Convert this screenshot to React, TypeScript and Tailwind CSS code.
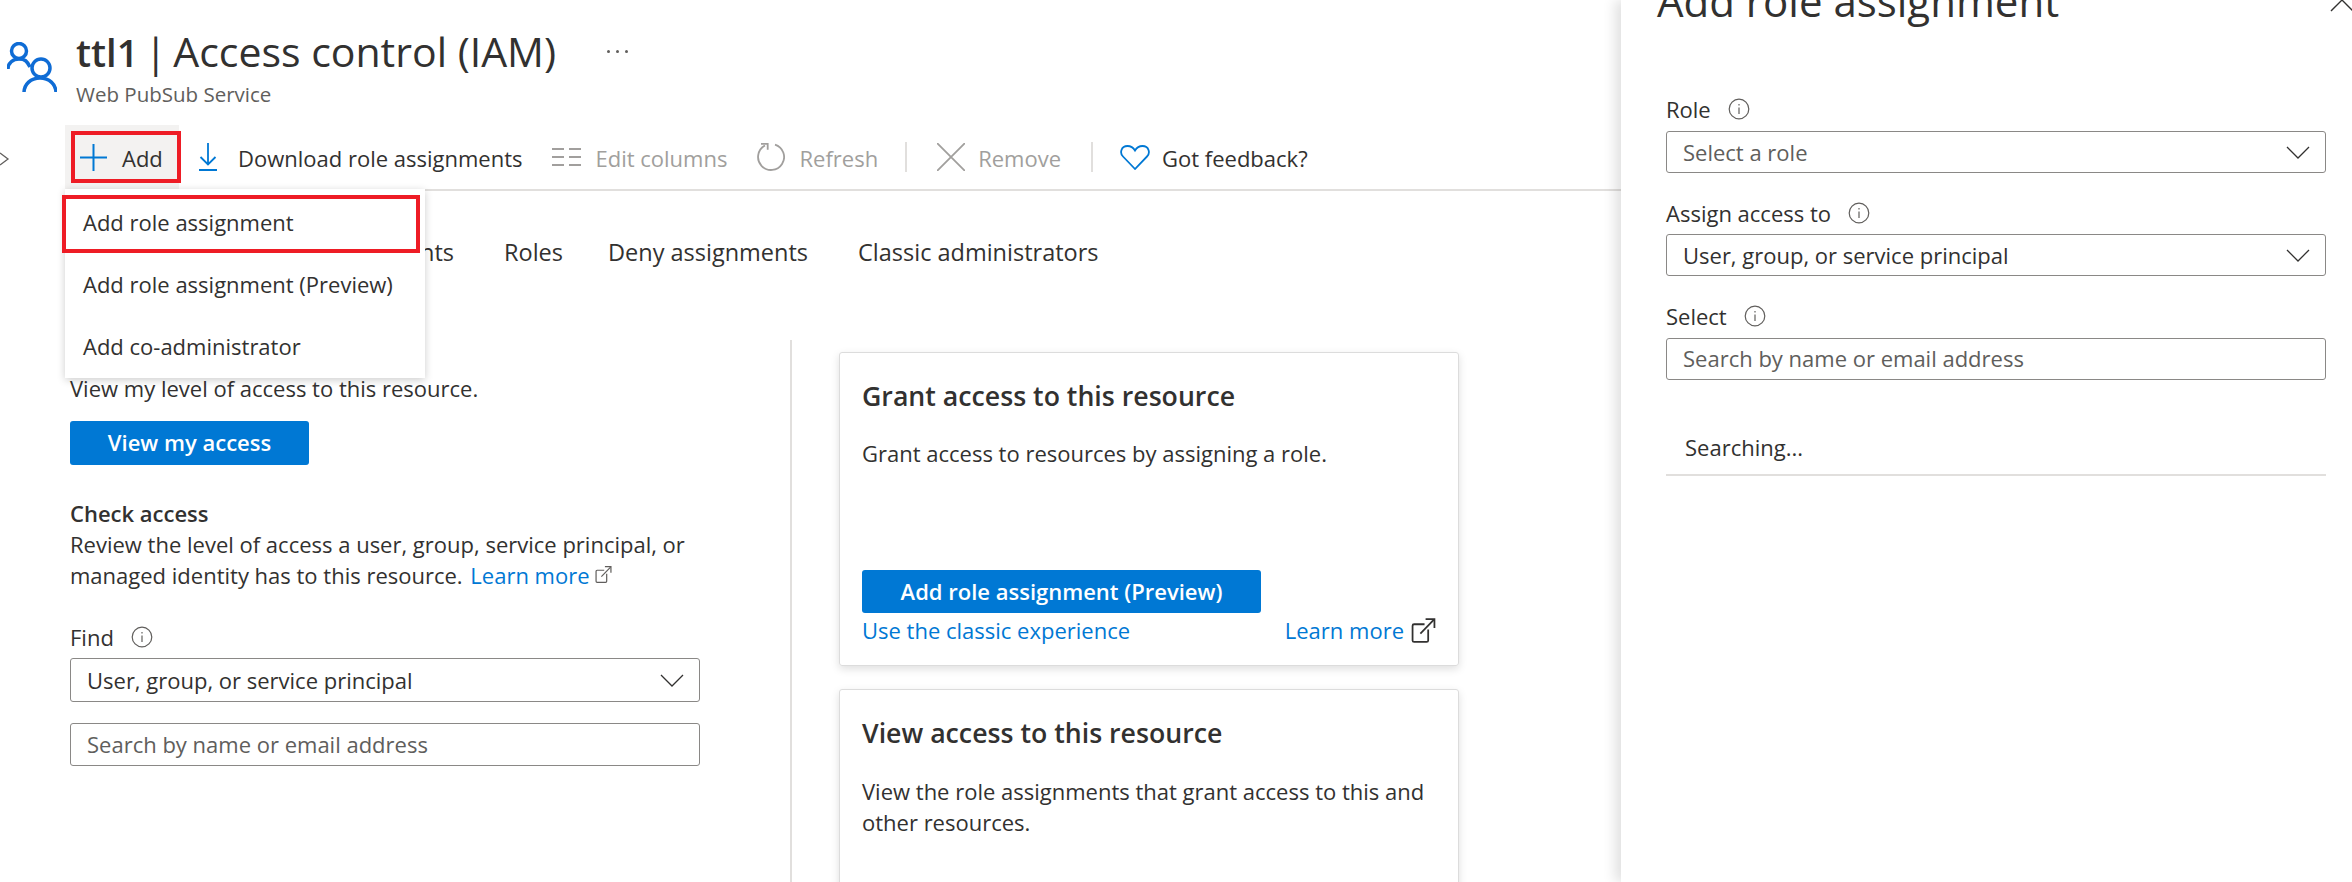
import React from 'react';

const PeopleIcon = () => (
  <svg width="50" height="50" viewBox="0 0 50 50" fill="none" stroke="#0f6cd5" strokeWidth="3.500">
    <circle cx="12" cy="9" r="7.500" />
    <path d="M1 27C1 21 6 17 12 17S20 19 23 25" />
    <circle cx="34" cy="26" r="9" />
    <path d="M17 51C17 42 24 36 33 36S49 42 49 51" />
  </svg>
);

const Chevron = () => (
  <svg width="24" height="14" viewBox="0 0 24 14" fill="none" stroke="#605e5c" strokeWidth="1.300">
    <path d="M3 1l8 6-8 6" />
    <path d="M12 1l8 6-8 6" />
  </svg>
);

const InfoIcon = () => (
  <svg width="22" height="22" viewBox="0 0 22 22" fill="none" stroke="#605e5c" strokeWidth="1.200">
    <circle cx="11" cy="11" r="9.800" />
    <path d="M11 9.500v6.500" />
    <path d="M11 6v1.400" />
  </svg>
);

const ExternalIcon = ({ size, color }: { size: number; color: string }) => (
  <svg width={size} height={size} viewBox="0 0 24 24" fill="none" stroke={color} strokeWidth="1.700">
    <path d="M13 6H3a1.500 1.500 0 0 0-1.500 1.500v14A1.500 1.500 0 0 0 3 23h12a1.500 1.500 0 0 0 1.500-1.500V11" />
    <path d="M9 15L22 1.500" />
    <path d="M14 1h8.500v8.500" />
  </svg>
);

const SelectBox = ({ text, placeholder }: { text: string; placeholder?: boolean }) => (
  <div className="flex h-full items-center justify-between rounded-[3px] border border-[#8a8886] bg-white pl-[16px] pr-[15px]">
    <span className={placeholder ? 'text-[#605e5c]' : 'text-[#323130]'}>{text}</span>
    <svg width="24" height="13" viewBox="0 0 24 13" fill="none" stroke="#323130" strokeWidth="1.300">
      <path d="M1 1l11 11L23 1" />
    </svg>
  </div>
);

const SearchInput = () => (
  <input
    readOnly
    placeholder="Search by name or email address"
    className="h-full w-full rounded-[3px] border border-[#8a8886] bg-white px-[16px] pb-[2px] text-[#605e5c] placeholder:text-[#605e5c]"
  />
);

const Label = ({ text }: { text: string }) => (
  <div className="flex h-[30px] items-center gap-[17px]">
    <span>{text}</span>
    <InfoIcon />
  </div>
);

export default function App() {
  return (
    <div className="flex h-[882px] w-[2352px] overflow-hidden bg-white font-['Open_Sans',sans-serif] text-[22px] leading-[31px] text-[#323130]">
      <main className="relative w-[1621px] shrink-0">
        {/* header */}
        <div className="flex h-[125px] items-start pl-[7px] pt-[42px]">
          <PeopleIcon />
          <div className="-mt-[22px] ml-[19px]">
            <div className="flex items-center">
              <h1 className="w-[482px] whitespace-nowrap text-[41px] leading-[62px]">
                <span className="text-[38px] font-semibold">ttl1</span>
                <span className="-mx-[4.500px]"> | </span>Access control (IAM)
              </h1>
              <span className="ml-[49px] flex gap-[6px]">
                <i className="h-[3px] w-[3px] rounded-full bg-[#605e5c]" />
                <i className="h-[3px] w-[3px] rounded-full bg-[#605e5c]" />
                <i className="h-[3px] w-[3px] rounded-full bg-[#605e5c]" />
              </span>
            </div>
            <div className="-mt-[2px] text-[20.500px] leading-[26px] text-[#605e5c]">Web PubSub Service</div>
          </div>
        </div>

        <div className="absolute left-[-12px] top-[152px]">
          <Chevron />
        </div>

        {/* toolbar */}
        <div className="ml-[65px] flex h-[66px] items-center border-b-2 border-[#e1dfdd]">
          <div className="flex h-full w-[114px] items-center bg-[#f3f2f1] pl-[15px]">
            <svg width="27" height="27" viewBox="0 0 27 27" stroke="#0078d4" strokeWidth="2">
              <path d="M13.500 0v27M0 13.500h27" />
            </svg>
            <span className="ml-[15px] mt-[2px]">Add</span>
          </div>
          <svg className="ml-[20px]" width="18" height="28" viewBox="0 0 18 28" fill="none" stroke="#0078d4" strokeWidth="1.800">
            <path d="M9 0v21M1.500 14L9 21.500 16.500 14M0 27h18" />
          </svg>
          <span className="ml-[21px] mt-[2px]">Download role assignments</span>
          <svg className="ml-[29px]" width="29" height="18" viewBox="0 0 29 18" stroke="#a19f9d" strokeWidth="1.800">
            <path d="M0 1h12M17 1h12M0 9h12M17 9h12M0 17h12M17 17h12" />
          </svg>
          <span className="ml-[15px] mt-[2px] text-[#a19f9d]">Edit columns</span>
          <svg className="ml-[30px]" width="28" height="28" viewBox="0 0 28 28" fill="none" stroke="#a19f9d" strokeWidth="1.800">
            <path d="M18 1.600A13 13 0 1 1 8 2.500" />
            <path d="M4 .8h6.700v6" />
          </svg>
          <span className="ml-[14px] mt-[2px] text-[#a19f9d]">Refresh</span>
          <i className="ml-[27px] h-[30px] w-[2px] bg-[#e1dfdd]" />
          <svg className="ml-[30px]" width="28" height="28" viewBox="0 0 28 28" stroke="#a19f9d" strokeWidth="1.800">
            <path d="M0 0l28 28M28 0L0 28" />
          </svg>
          <span className="ml-[13px] mt-[2px] text-[#a19f9d]">Remove</span>
          <i className="ml-[30px] h-[30px] w-[2px] bg-[#e1dfdd]" />
          <svg className="ml-[27px]" width="30" height="25" viewBox="0 0 30 25" fill="none" stroke="#0078d4" strokeWidth="1.800">
            <path d="M15 24L3 11.500C-.5 8 1 1 7.500 1c3.500 0 6 2 7.500 4.500C16.500 3 19 1 22.500 1 29 1 30.500 8 27 11.500z" />
          </svg>
          <span className="ml-[12px] mt-[2px]">Got feedback?</span>
        </div>

        {/* tabs */}
        <div className="flex h-[149px] items-start pl-[70px] pt-[45px] text-[23.500px] leading-[32px]">
          <div className="flex w-[384px] justify-between">
            <span>Check access</span>
            <span>Role assignments</span>
          </div>
          <span className="ml-[50px]">Roles</span>
          <span className="ml-[45px]">Deny assignments</span>
          <span className="ml-[50px]">Classic administrators</span>
        </div>

        <div className="flex">
          {/* left column */}
          <div className="h-[542px] w-[792px] shrink-0 border-r-2 border-[#e1dfdd] pl-[70px]">
            <div className="h-[32px] font-semibold">My access</div>
            <div className="h-[32px] pt-[1px]">View my level of access to this resource.</div>
            <button className="mt-[17px] flex h-[44px] w-[239px] items-center justify-center rounded-[3px] bg-[#0078d4] pb-[1px] font-semibold text-white">
              View my access
            </button>
            <div className="mt-[33px] font-semibold">Check access</div>
            <p>
              Review the level of access a user, group, service principal, or
              <br />
              managed identity has to this resource.{' '}
              <span className="ml-[2px] text-[#0078d4]">Learn more</span>{' '}
              <span className="inline-block align-[1px]">
                <ExternalIcon size={17} color="#605e5c" />
              </span>
            </p>
            <div className="mt-[31px]">
              <Label text="Find" />
            </div>
            <div className="mt-[6px] h-[44px] w-[630px]">
              <SelectBox text="User, group, or service principal" />
            </div>
            <div className="mt-[21px] h-[43px] w-[630px]">
              <SearchInput />
            </div>
          </div>

          {/* cards */}
          <div className="pl-[47px] pt-[12px]">
            <div className="flex h-[314px] w-[620px] flex-col rounded-[3px] border border-[#dcdcdc] px-[22px] pt-[25px] shadow-[0_3px_8px_rgba(0,0,0,0.13)]">
              <h2 className="text-[26.700px] font-semibold leading-[36px]">Grant access to this resource</h2>
              <p className="mt-[24px]">Grant access to resources by assigning a role.</p>
              <button className="mt-[101px] flex h-[43px] w-[399px] shrink-0 items-center justify-center rounded-[3px] bg-[#0078d4] font-semibold text-white">
                Add role assignment (Preview)
              </button>
              <div className="mt-[2px] flex items-center justify-between text-[#0078d4]">
                <span>Use the classic experience</span>
                <span className="flex items-center gap-[7px]">
                  Learn more
                  <ExternalIcon size={25} color="#323130" />
                </span>
              </div>
            </div>
            <div className="mt-[23px] h-[300px] w-[620px] rounded-[3px] border border-[#dcdcdc] px-[22px] pt-[25px] shadow-[0_3px_8px_rgba(0,0,0,0.13)]">
              <h2 className="text-[26.700px] font-semibold leading-[36px]">View access to this resource</h2>
              <p className="mt-[25px]">
                View the role assignments that grant access to this and
                <br />
                other resources.
              </p>
            </div>
          </div>
        </div>

        {/* add menu */}
        <div className="absolute left-[65px] top-[189px] flex h-[189px] w-[360px] flex-col justify-around bg-white pl-[18px] pt-[2px] shadow-[0_2px_8px_rgba(0,0,0,0.2)]">
          <span>Add role assignment</span>
          <span>Add role assignment (Preview)</span>
          <span>Add co-administrator</span>
        </div>

        {/* red annotations */}
        <div className="absolute left-[71px] top-[131px] h-[52px] w-[110px] border-4 border-[#ee1c25]" />
        <div className="absolute left-[62px] top-[195px] h-[58px] w-[358px] border-4 border-[#ee1c25]" />
      </main>

      {/* add role assignment panel */}
      <aside className="z-10 w-[731px] shrink-0 bg-white pl-[45px] pr-[26px] shadow-[-6px_0_12px_rgba(0,0,0,0.12)]">
        <div className="-ml-[9px] -mt-[29px] flex h-[120px] items-start justify-between">
          <h2 className="text-[42px] font-medium leading-[60px]">Add role assignment</h2>
          <svg className="-mr-[28px] mt-[17px]" width="24" height="24" viewBox="0 0 24 24" stroke="#323130" strokeWidth="1.400">
            <path d="M1 1l22 22M23 1L1 23" />
          </svg>
        </div>
        <div className="mt-[3px]">
          <Label text="Role" />
        </div>
        <div className="mt-[7px] h-[42px]">
          <SelectBox text="Select a role" placeholder />
        </div>
        <div className="mt-[25px]">
          <Label text="Assign access to" />
        </div>
        <div className="mt-[6px] h-[42px]">
          <SelectBox text="User, group, or service principal" />
        </div>
        <div className="mt-[25px]">
          <Label text="Select" />
        </div>
        <div className="mt-[7px] h-[42px]">
          <SearchInput />
        </div>
        <div className="mt-[52px] border-b-2 border-[#e1dfdd] pb-[12px] pl-[19px] leading-[30px]">Searching...</div>
      </aside>
    </div>
  );
}
